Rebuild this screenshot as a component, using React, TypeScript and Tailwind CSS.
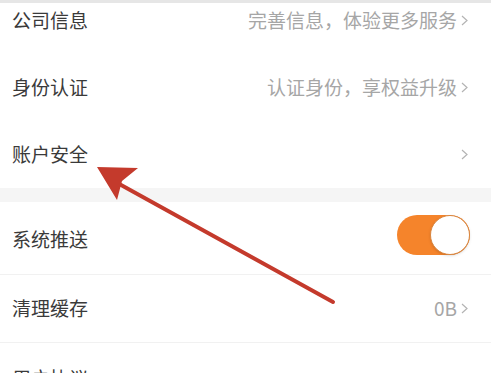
import React from "react";

const font = { fontFamily: '"Noto Sans CJK SC", "Noto Sans", sans-serif' };

// 细箭头 >
const Chevron = () => (
	<svg width="7" height="11" viewBox="0 0 7 11" className="ml-[4px] shrink-0">
		<polyline points="1,1 6,5.5 1,10" fill="none" stroke="#b3b3b3" strokeWidth="1.2" />
	</svg>
);

const Row = ({ title, hint, h, divider }: { title: string; hint?: string; h: string; divider?: boolean }) => (
	<div className={`flex items-center justify-between pl-[12px] pr-[23px] ${h} ${divider ? "border-b border-[#f1f1f1]" : ""}`}>
		<span className="text-[19px] text-[#3a3a3a]">{title}</span>
		<div className="flex items-center">
			{hint && <span className="text-[19px] text-[#a6a6a6]">{hint}</span>}
			<Chevron />
		</div>
	</div>
);

export default function App() {
	return (
		<div className="relative w-[498px] h-[373px] overflow-hidden bg-white" style={font}>
			<div className="w-[491px] bg-white">
				<div className="h-[3px] bg-[#e6e6e6]" />
				<div className="-mt-[17px]">
					<Row title="公司信息" hint="完善信息，体验更多服务" h="h-[68px]" />
					<Row title="身份认证" hint="认证身份，享权益升级" h="h-[67px]" />
					<Row title="账户安全" h="h-[67px]" />
				</div>
				<div className="h-[14px] bg-[#f5f5f5]" />
				<div className="flex items-center justify-between pl-[12px] pr-[21px] h-[73px] border-b border-[#f1f1f1]">
					<span className="text-[19px] text-[#3a3a3a] mt-[2px]">系统推送</span>
					<div className="-mt-[6px] w-[73px] h-[40px] rounded-full bg-[#f5842b] flex items-center justify-end">
						<div className="w-[40px] h-[40px] rounded-full bg-white border border-[#d9863f] shadow-sm" />
					</div>
				</div>
				<Row title="清理缓存" hint="0B" h="h-[68px]" divider />
				<Row title="用户协议" h="h-[71px]" />
			</div>
			<svg className="absolute inset-0 pointer-events-none" width="498" height="373" viewBox="0 0 498 373">
				<line x1="333" y1="302" x2="112" y2="180" stroke="#c43a2c" strokeWidth="4" strokeLinecap="round" />
				<polygon points="97,167 138,168 122,181 117,200" fill="#c43a2c" />
			</svg>
		</div>
	);
}
